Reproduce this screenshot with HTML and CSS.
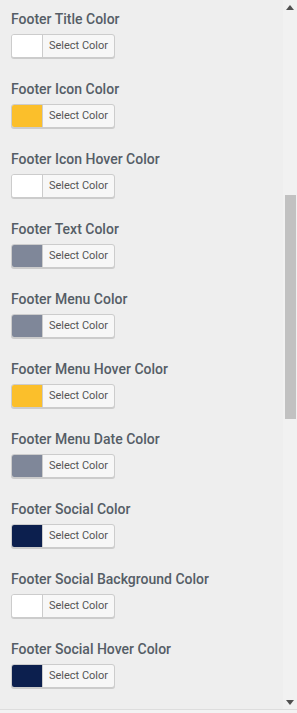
FILE: index.html
```html
<!DOCTYPE html>
<html lang="en">
<head>
    <meta charset="UTF-8">
    <meta name="viewport" content="width=device-width, initial-scale=1.0">
    <title>Footer Colors</title>
    <link rel="stylesheet" href="styles.css">
</head>
<body>

<div class="frame">
    <div class="panel">
        <div class="control"><span class="label">Footer Title Color</span><button class="color-btn"><span class="swatch white"></span><span class="btn-text">Select Color</span></button></div>
        <div class="control"><span class="label">Footer Icon Color</span><button class="color-btn"><span class="swatch yellow"></span><span class="btn-text">Select Color</span></button></div>
        <div class="control"><span class="label">Footer Icon Hover Color</span><button class="color-btn"><span class="swatch white"></span><span class="btn-text">Select Color</span></button></div>
        <div class="control"><span class="label">Footer Text Color</span><button class="color-btn"><span class="swatch grey"></span><span class="btn-text">Select Color</span></button></div>
        <div class="control"><span class="label">Footer Menu Color</span><button class="color-btn"><span class="swatch grey"></span><span class="btn-text">Select Color</span></button></div>
        <div class="control"><span class="label">Footer Menu Hover Color</span><button class="color-btn"><span class="swatch yellow"></span><span class="btn-text">Select Color</span></button></div>
        <div class="control"><span class="label">Footer Menu Date Color</span><button class="color-btn"><span class="swatch grey"></span><span class="btn-text">Select Color</span></button></div>
        <div class="control"><span class="label">Footer Social Color</span><button class="color-btn"><span class="swatch navy"></span><span class="btn-text">Select Color</span></button></div>
        <div class="control"><span class="label">Footer Social Background Color</span><button class="color-btn"><span class="swatch white"></span><span class="btn-text">Select Color</span></button></div>
        <div class="control"><span class="label">Footer Social Hover Color</span><button class="color-btn"><span class="swatch navy"></span><span class="btn-text">Select Color</span></button></div>
    </div>

    <div class="scrollbar">
        <div class="scroll-arrow">
            <svg width="8" height="5" viewBox="0 0 8 5"><polygon points="4,0 8,5 0,5" fill="#505050"/></svg>
        </div>
        <div class="scroll-track">
            <div class="scroll-thumb"></div>
        </div>
        <div class="scroll-arrow">
            <svg width="8" height="5" viewBox="0 0 8 5"><polygon points="0,0 8,0 4,5" fill="#505050"/></svg>
        </div>
    </div>
</div>
<div class="panel-bottom"></div>

</body>
</html>
```
FILE: styles.css
```css
html, body {
    margin: 0;
    padding: 0;
}
body {
    font-family: Roboto, "Noto Sans", sans-serif;
    background-color: #eeeeee;
    width: 297px;
    height: 713px;
    overflow: hidden;
}
.frame {
    display: flex;
    height: 709px;
}
.panel {
    flex: 1;
    overflow: hidden;
}
.control {
    height: 70px;
    padding: 0 11px;
    box-sizing: border-box;
}
.label {
    display: block;
    font-size: 14px;
    font-weight: 500;
    line-height: 22px;
    padding-top: 8px;
    color: #555d66;
    margin-bottom: 4px;
    white-space: nowrap;
}
.color-btn {
    display: flex;
    align-items: stretch;
    width: 104px;
    height: 24px;
    padding: 0;
    margin: 0;
    background-color: #f7f7f7;
    border: 1px solid #cccccc;
    border-radius: 3px;
    box-shadow: 0 1px 0 #cccccc;
    cursor: pointer;
    overflow: hidden;
    font-family: Roboto, "Noto Sans", sans-serif;
}
.swatch {
    width: 30px;
    border-right: 1px solid #cccccc;
}
.btn-text {
    flex: 1;
    font-size: 11px;
    line-height: 22px;
    color: #555555;
    text-align: center;
}
.white { background-color: #ffffff; }
.yellow { background-color: #fbbf2b; }
.grey { background-color: #7f8799; }
.navy { background-color: #0c1f4e; }

/* scrollbar of the panel */
.scrollbar {
    width: 14px;
    display: flex;
    flex-direction: column;
    background-color: #f1f1f1;
}
.scroll-arrow {
    height: 14px;
    display: flex;
    align-items: center;
    justify-content: center;
}
.scroll-arrow svg {
    display: block;
}
.scroll-track {
    flex: 1;
    padding: 181px 1px 0 2px;
}
.scroll-thumb {
    height: 224px;
    background-color: #c1c1c1;
}
.panel-bottom {
    height: 3px;
    border-top: 1px solid #dddddd;
    background-color: #f3f3f3;
}
```
